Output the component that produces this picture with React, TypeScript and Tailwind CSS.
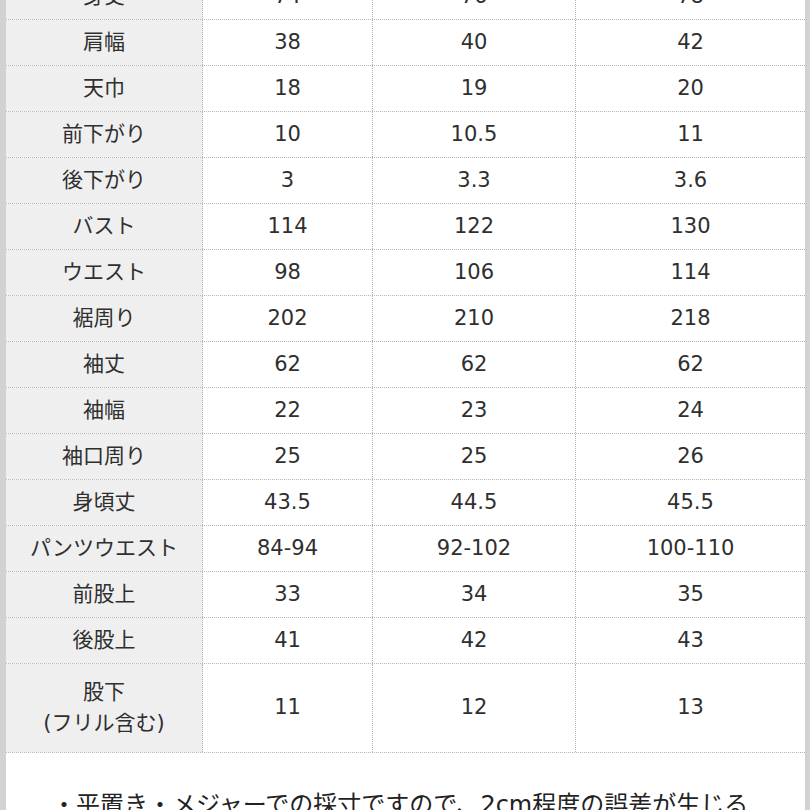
import React from "react";

const rows: [string, string, string, string][] = [
  ["身丈", "74", "76", "78"],
  ["肩幅", "38", "40", "42"],
  ["天巾", "18", "19", "20"],
  ["前下がり", "10", "10.5", "11"],
  ["後下がり", "3", "3.3", "3.6"],
  ["バスト", "114", "122", "130"],
  ["ウエスト", "98", "106", "114"],
  ["裾周り", "202", "210", "218"],
  ["袖丈", "62", "62", "62"],
  ["袖幅", "22", "23", "24"],
  ["袖口周り", "25", "25", "26"],
  ["身頃丈", "43.5", "44.5", "45.5"],
  ["パンツウエスト", "84-94", "92-102", "100-110"],
  ["前股上", "33", "34", "35"],
  ["後股上", "41", "42", "43"],
];

const font = { fontFamily: '"DejaVu Sans", "Noto Sans CJK JP", sans-serif' };

function Row({ r, tall }: { r: React.ReactNode[]; tall?: boolean }) {
  const h = tall ? "h-[89px]" : "h-[46px]";
  return (
    <div className={`grid grid-cols-[197px_170px_203px_229px] ${h} border-b border-dotted border-[#b4b4b4]`}>
      <div className="flex items-center justify-center bg-[#efefef] border-r border-dotted border-[#b4b4b4] text-center leading-[31px]">
        {r[0]}
      </div>
      <div className="flex items-center justify-center border-r border-dotted border-[#b4b4b4]">{r[1]}</div>
      <div className="flex items-center justify-center border-r border-dotted border-[#b4b4b4]">{r[2]}</div>
      <div className="flex items-center justify-center">{r[3]}</div>
    </div>
  );
}

export default function App() {
  return (
    <div
      className="w-[810px] h-[810px] overflow-hidden bg-white border-l-[6px] border-r-[5px] border-[#d2d2d2] text-[#2f2f2f] text-[21px]"
      style={font}
    >
      <div className="mt-[-26px]">
        {rows.map((r) => (
          <Row key={r[0]} r={r} />
        ))}
        <Row
          tall
          r={[
            <span key="a" className="block">
              股下
              <br />
              (フリル含む)
            </span>,
            "11",
            "12",
            "13",
          ]}
        />
        <div className="pt-[36px] pl-[46px] text-[24px] leading-[32px] whitespace-nowrap text-[#222]">
          ・平置き・メジャーでの採寸ですので、2cm程度の誤差が生じる
        </div>
      </div>
    </div>
  );
}
